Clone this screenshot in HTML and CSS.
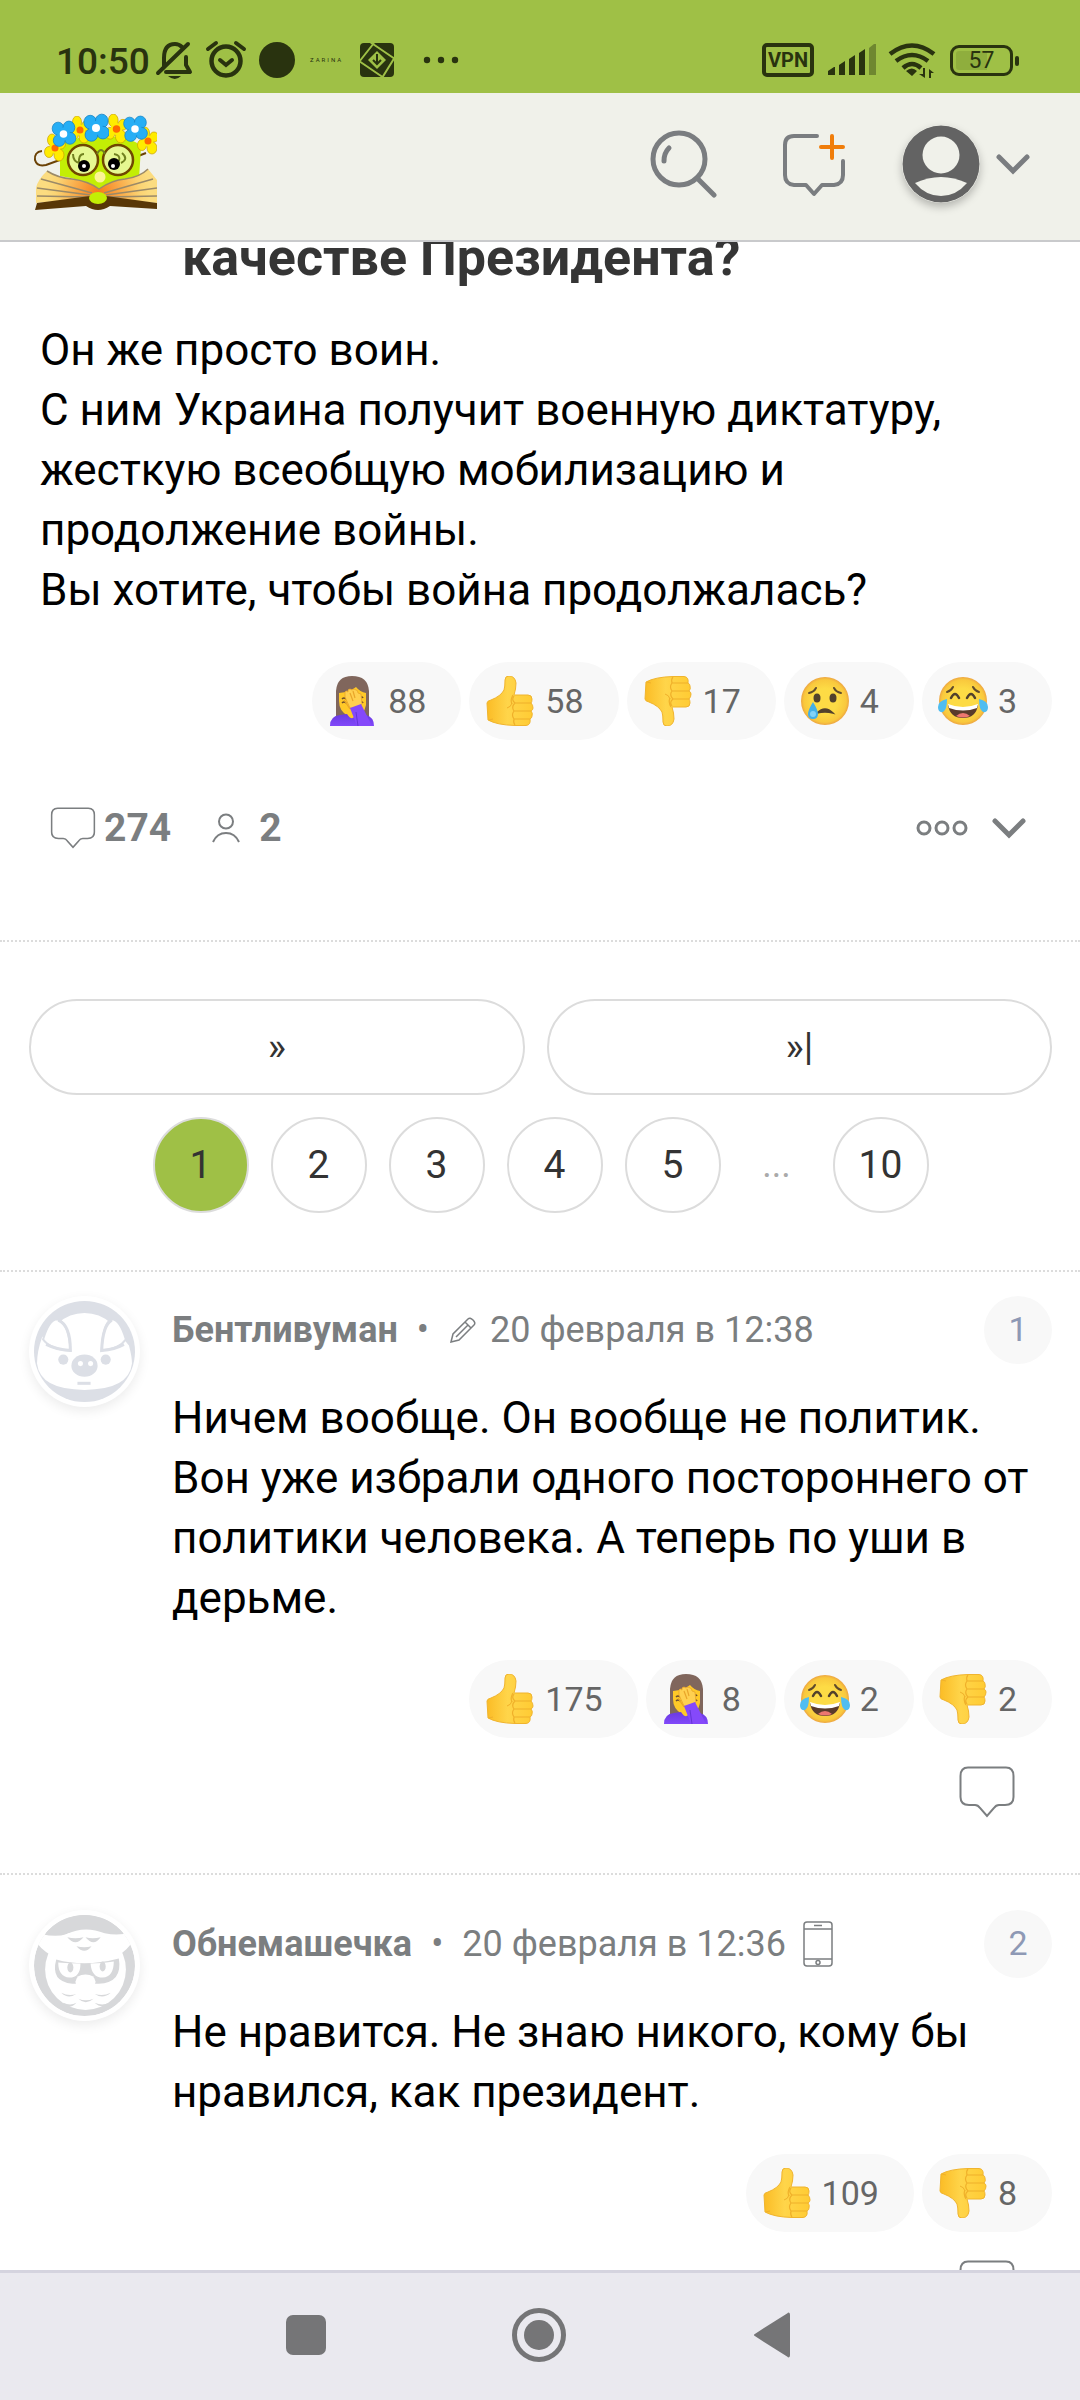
FILE: index.html
```html
<!DOCTYPE html>
<html lang="ru">
<head>
<meta charset="utf-8">
<meta name="viewport" content="width=device-width, initial-scale=1">
<title>Обсуждение</title>
<link rel="stylesheet" href="styles.css">
</head>
<body>
<svg class="sprite" aria-hidden="true">
  <defs>
    <radialGradient id="face" cx=".5" cy=".5" r=".52"><stop offset=".5" stop-color="#fddb45"/><stop offset=".85" stop-color="#f9c83d"/><stop offset="1" stop-color="#e99a42"/></radialGradient>
    <linearGradient id="sleeve" x1="0" y1="0" x2="0" y2="1"><stop offset="0" stop-color="#6a3ae0"/><stop offset="1" stop-color="#8148fa"/></linearGradient>
    <linearGradient id="hand" x1="0" y1="0" x2="1" y2="0"><stop offset="0" stop-color="#fbbc26"/><stop offset=".45" stop-color="#ffd54a"/><stop offset="1" stop-color="#ffcb33"/></linearGradient>
  </defs>
  <symbol id="thumb" viewBox="0 0 50 50">
    <path d="M2 27 Q2 25 6 24 Q16 20 19 14 Q20 11 20 4 Q20 0 24 0 Q30 0 31 7 Q31 13 29 19 H43 Q47 19 47 23 Q47 26 46 27 Q48 29 48 32 Q48 34 46 35 Q48 37 47 40 Q47 42 45 43 Q46 49 41 49.500 H30 Q12 49 3 44 Z" fill="url(#hand)" stroke="#f0b42e" stroke-width="1"/>
    <path d="M28 19 Q25 24 27 28 M30 27 H46 M29 35 H46 M29 43 H45 M29 20 Q26 24 30 27 Q26 31 29 35 Q26 39 29 43 Q28 47 30 49" fill="none" stroke="#f0b02a" stroke-width="1.200"/>
    <path d="M4 44 L8 43 M27 27 Q26 31 22 32" fill="none" stroke="#f0b02a"/>
  </symbol>
  <symbol id="thumb-down" viewBox="0 0 50 50"><use href="#thumb" width="50" height="50" transform="matrix(1 0 0 -1 0 50)"/></symbol>
  <symbol id="facepalm" viewBox="0 0 50 50">
    <path d="M8 42 V15 Q9 0 24 0 Q40 0 41 15 V42 Z" fill="#80665c"/>
    <path d="M11 17 Q22 16 28 11 Q32 16 38 17 V29 Q36 39 28 41 V44 H20 V40 Q11 35 11 25 Z" fill="#ffc928"/>
    <path d="M2 50 Q2 40 12 39 L19 38 Q24 46 28 39 L38 39 Q46 41 46 50 Z" fill="url(#sleeve)"/>
    <path d="M14 23 q2 -2 4 0 M14 27 q2 -2 4 0 M31 22 q3 -2 4 0 M31 27 q3 -2 4 0" fill="none" stroke="#6c4d2c" stroke-width="1.500"/>
    <path d="M17 16 Q18 14 20 16 L20 14 Q22 12 24 14 Q26 12 28 14 Q30 14 30 17 L33 18 L34 28 L29 33 L22 32 L17 21 Z" fill="#ffd050" stroke="#e9a52a" stroke-width=".8"/>
    <path d="M22 17 L25 25 M25 15 L27 22 M16 24 L22 33" stroke="#e9a52a" stroke-width="1.200"/>
    <path d="M22 32 L33 28 L44 50 H29 Z" fill="#8549fa"/>
    <path d="M28 36 L30 50" stroke="#6334d4" stroke-width="1"/>
  </symbol>
  <symbol id="cry" viewBox="0 0 50 50">
    <circle cx="25" cy="25" r="24" fill="url(#face)"/>
    <ellipse cx="17" cy="22" rx="3.500" ry="4.500" fill="#52412c"/><ellipse cx="33" cy="22" rx="3.500" ry="4.500" fill="#52412c"/>
    <path d="M9 17 Q14 16 16 12 M41 17 Q36 16 34 12" fill="none" stroke="#604b2c" stroke-width="2" stroke-linecap="round"/>
    <path d="M17 37 Q25 29 33 37 Q25 35 17 37Z" fill="#52412c" stroke="#52412c" stroke-width="1.500"/>
    <path d="M13 26 Q18 34 18 38 Q18 43 13 43 Q8 43 8 38 Q8 34 13 26Z" fill="#43afe8"/><circle cx="13" cy="38" r="3" fill="#82d2f7"/>
  </symbol>
  <symbol id="joy" viewBox="0 0 50 50">
    <circle cx="25" cy="25" r="24" fill="url(#face)"/>
    <path d="M9 16 Q13 15 15 11 M41 16 Q37 15 35 11" fill="none" stroke="#604b2c" stroke-width="2" stroke-linecap="round"/>
    <path d="M13 22 Q17 14 21 22 M29 22 Q33 14 37 22" fill="none" stroke="#52412c" stroke-width="2.500" stroke-linecap="round"/>
    <path d="M10 29 Q25 35 40 29 Q38 42 25 42 Q12 42 10 29Z" fill="#5a3b2b"/><path d="M10 28 Q25 34 40 28 L39 32 Q25 37 11 32Z" fill="#fff"/><path d="M18 40 Q25 34 32 40 Q25 43 18 40Z" fill="#ed7770"/>
    <path d="M9 23 Q0 25 0 31 Q0 37 5 36 Q9 34 9 23Z M41 23 Q50 25 50 31 Q50 37 45 36 Q41 34 41 23Z" fill="#4fbdf0"/>
  </symbol>
  <symbol id="bubble" viewBox="0 0 56 52">
    <path d="M9 1.500 H47 Q54.500 1.500 54.500 10 V31 Q54.500 39 46 39 H40 Q37 39 35 42 L28 50 L21 42 Q19 39 16 39 H10 Q1.500 39 1.500 31 V10 Q1.500 1.500 9 1.500Z" fill="none" stroke="#7b7e80" stroke-width="2"/>
  </symbol>
  <symbol id="blue-flower" viewBox="-11 -13 22 26">
    <g fill="#26aef5" stroke="#1583c4" stroke-width=".7"><ellipse cx="-5" cy="-5" rx="5.500" ry="6"/><ellipse cx="5" cy="-6" rx="5.500" ry="6"/><ellipse cx="6" cy="4" rx="5.500" ry="5.500"/><ellipse cx="-4" cy="6" rx="5.500" ry="5.500"/></g><circle r="6" fill="#26aef5"/><circle r="3.500" fill="#fff"/>
  </symbol>
  <symbol id="yellow-flower" viewBox="-11 -14 22 28">
    <g fill="#ffec00" stroke="#caa100" stroke-width=".7"><ellipse cx="-3" cy="-8" rx="4.500" ry="6"/><ellipse cx="6" cy="-4" rx="4.500" ry="5"/><ellipse cx="4" cy="7" rx="5" ry="6"/><ellipse cx="-6" cy="4" rx="4.500" ry="5.500"/></g><circle r="5.500" fill="#ffec00"/><circle r="3.500" fill="#ff6a00"/>
  </symbol>
</svg>

<div class="screen">
  <div class="status">
    <div class="status-side">
      <span class="clock">10:50</span>
      <svg class="notifications" viewBox="155 38 305 44" aria-hidden="true">
        <g fill="none" stroke="#29330f" stroke-width="4">
          <path d="M164 66 V58 Q164 44 175 44 Q179 44 182 47 M186 57 V65 L190 72 H166 M158 73 L188 44" stroke-linecap="round" stroke-linejoin="round"/>
          <circle cx="226" cy="61" r="14.500" stroke-width="4.500"/><path d="M220 60 L226 65 L232 60 M208 49 L216 43 M236 43 L244 49" stroke-linecap="round"/>
        </g>
        <path d="M168 76 H181 Q175 82 168 76Z" fill="#29330f"/>
        <circle cx="277" cy="60" r="18" fill="#29330f"/>
        <text class="brand" x="310" y="62">ZARINA</text>
        <rect x="360" y="43" width="34" height="34" rx="4" fill="#29330f"/>
        <path d="M370 42 L395 59 M395 57 L382 78 M384 78 L359 61 M359 62 L374 43" stroke="#9fc046" stroke-width="2"/>
        <path d="M377 51 L386 60 L377 69 L368 60Z" fill="#9fc046"/><path d="M377 54 V64 M373 60 L377 64 L381 60" stroke="#29330f" stroke-width="2" fill="none"/>
        <g fill="#29330f"><circle cx="427" cy="60" r="3.200"/><circle cx="441" cy="60" r="3.200"/><circle cx="455" cy="60" r="3.200"/></g>
      </svg>
    </div>
    <div class="status-side">
      <span class="vpn">VPN</span>
      <svg class="signals" viewBox="826 42 110 38" aria-hidden="true">
        <g fill="#29330f"><path d="M827 76 V72 L833 68 H834 V76Z M838 76 V66 L844 62 V76Z M848 76 V60 L854 56 V76Z M858 76 V54 L864 50 V76Z"/><path d="M868 76 V49 L873 45 H875 V76Z" opacity=".4"/><path d="M911 77 L905 72 Q911 67 916 72Z M922 69 v6 h-4 l6 4 v-10z M928 79 v-9 l5 4 h-3 v5z"/></g>
        <path d="M889 55 Q911 38 933 55 M895 62 Q911 50 927 62 M902 69 Q911 61 920 69" fill="none" stroke="#29330f" stroke-width="4.500"/>
      </svg>
      <span class="battery">57</span>
    </div>
  </div>

  <header class="topbar">
    <a class="home" href="#" aria-label="Главная">
      <svg viewBox="33 112 124 98">
        <defs><radialGradient id="page" gradientUnits="userSpaceOnUse" cx="98" cy="192" r="52"><stop offset="0" stop-color="#f77a18"/><stop offset=".8" stop-color="#fbd372"/><stop offset="1" stop-color="#fbdc80"/></radialGradient></defs>
        <path d="M42 150 Q34 151 35 159 Q37 166 46 164 L68 156 M133 157 L146 152" fill="none" stroke="#6b4205" stroke-width="2"/>
        <path d="M60 146 Q66 136 100 135 Q135 136 141 146 L139 178 Q110 180 99 190 Q84 178 60 175Z" fill="#c3ee05"/>
        <path d="M36 202 V187 Q38 178 47 170 Q58 177 72 178 Q88 180 99 188 Q112 179 125 178 Q140 176 148 168 L157 179 V202 L98 196Z" fill="url(#page)"/>
        <path d="M47 170 Q58 177 72 178 Q88 180 99 188 Q112 179 125 178 Q140 176 148 168 M41 178 L92 192 M37 187 L90 194 M37 195 L88 196 M153 178 L104 192 M157 187 L106 194 M157 195 L108 196" fill="none" stroke="#9b8a68" stroke-width="1.500"/>
        <path d="M35 209 L37 202 L90 195 H106 L157 202 V208 L110 205 Q98 213 86 205Z" fill="#583707"/>
        <ellipse cx="98" cy="197" rx="9" ry="6" fill="#c3ee05"/>
        <g fill="#e6f891" stroke="#704700" stroke-width="2.500"><circle cx="83" cy="159" r="15"/><circle cx="118" cy="159" r="15"/></g>
        <path d="M97 153 Q101 145 105 153 M73 153 Q73 161 80 162 M84 153 Q78 153 79 163 M114 153 Q121 154 119 160 M122 152 Q129 158 121 162" fill="none" stroke="#71811f" stroke-width="2"/>
        <circle cx="84" cy="165" r="6" fill="#000"/><circle cx="114" cy="163" r="6" fill="#000"/><circle cx="84" cy="165" r="2" fill="#fff"/><circle cx="113" cy="165" r="2" fill="#fff"/><circle cx="100" cy="176" r="5.500" fill="#fcf495"/>
        <use href="#yellow-flower" x="44" y="132" width="22" height="30"/><use href="#yellow-flower" x="69" y="115" width="22" height="28"/><use href="#yellow-flower" x="104" y="113" width="25" height="30"/><use href="#yellow-flower" x="137" y="126" width="22" height="28"/>
        <use href="#blue-flower" x="51" y="119" width="25" height="28"/><use href="#blue-flower" x="83" y="112" width="26" height="30"/><use href="#blue-flower" x="122" y="114" width="26" height="28"/>
      </svg>
    </a>
    <div class="actions">
      <button class="action" aria-label="Поиск"><svg width="68" height="68" viewBox="0 0 68 68" fill="none" stroke="#7a7d80" stroke-width="5" stroke-linecap="round"><circle cx="29" cy="29" r="26"/><path d="M47 48 L64 65"/><path d="M19 18 Q14 23 14 31"/></svg></button>
      <button class="action" aria-label="Создать"><svg width="66" height="66" viewBox="0 0 66 66" fill="none" stroke="#7a7d80" stroke-width="4" stroke-linecap="round" stroke-linejoin="round"><path d="M36 5 H13 Q4 5 4 14 V44 Q4 53 13 54 H25 L33 63 L41 54 H53 Q62 53 62 44 V30"/><path d="M51 5 V27 M40 16 H62" stroke="#f07d0a"/></svg></button>
      <button class="action profile" aria-label="Профиль"><svg class="profile-face" width="78" height="78" viewBox="0 0 78 78"><circle cx="39" cy="39" r="38.500" fill="#636363"/><circle cx="39" cy="30" r="18.500" fill="#f0f1ea"/><path d="M13 58 Q39 46 65 58 Q54 71 39 71 Q24 71 13 58Z" fill="#f0f1ea"/></svg><svg width="34" height="22" viewBox="0 0 34 22"><path d="M3 4 L17 18 L31 4" fill="none" stroke="#7a7d80" stroke-width="5" stroke-linecap="round"/></svg></button>
    </div>
  </header>

  <main class="content">
    <article class="post">
      <h1 class="post-title">качестве Президента?</h1>
      <p class="text">Он же просто воин.<br>С ним Украина получит военную диктатуру, жесткую всеобщую мобилизацию и продолжение войны.<br>Вы хотите, чтобы война продолжалась?</p>
      <div class="reactions">
        <button class="reaction"><svg><use href="#facepalm"/></svg>88</button>
        <button class="reaction"><svg><use href="#thumb"/></svg>58</button>
        <button class="reaction"><svg><use href="#thumb-down"/></svg>17</button>
        <button class="reaction"><svg><use href="#cry"/></svg>4</button>
        <button class="reaction"><svg><use href="#joy"/></svg>3</button>
      </div>
      <div class="stats">
        <a class="stat" href="#"><svg width="46" height="42" viewBox="0 0 56 52"><use href="#bubble" width="56" height="52"/></svg>274</a>
        <a class="stat people" href="#"><svg width="30" height="30" viewBox="0 0 30 30" fill="none" stroke="#7b7e80" stroke-width="2"><circle cx="15" cy="8.500" r="7"/><path d="M2 29 Q6 20 15 20 Q24 20 28 29"/></svg>2</a>
        <button class="more" aria-label="Ещё"><svg width="52" height="18" viewBox="0 0 52 18" fill="none" stroke="#7b7e80" stroke-width="3"><circle cx="8" cy="9" r="6"/><circle cx="26" cy="9" r="6"/><circle cx="44" cy="9" r="6"/></svg><svg width="34" height="22" viewBox="0 0 34 22"><path d="M3 4 L17 18 L31 4" fill="none" stroke="#7b7e80" stroke-width="5" stroke-linecap="round"/></svg></button>
      </div>
    </article>

    <nav class="pager" aria-label="Страницы">
      <div class="pager-row">
        <a class="page jump" href="#">»</a><a class="page jump" href="#">»|</a>
      </div>
      <div class="pager-row pages">
        <a class="page current" href="#" aria-current="page">1</a><a class="page" href="#">2</a><a class="page" href="#">3</a><a class="page" href="#">4</a><a class="page" href="#">5</a><span class="gap">...</span><a class="page" href="#">10</a>
      </div>
    </nav>

    <article class="comment first">
      <span class="avatar"><svg viewBox="0 0 100 100">
        <defs><clipPath id="round"><circle cx="50" cy="50" r="50"/></clipPath></defs>
        <circle cx="50" cy="50" r="50" fill="#dcdfe6"/>
        <path d="M24 22 Q35 12 50 12 Q65 12 76 22 L94 44 Q97 55 97 62 Q94 88 50 88 Q6 88 3 62 Q3 50 8 36Z" fill="#fff"/>
        <path d="M9 38 Q15 18 23 18 Q35 22 36 49 Q16 48 9 38Z M91 38 Q85 18 77 18 Q68 22 67 49 Q84 48 91 38Z" fill="#fff" stroke="#dcdfe6" stroke-width="2"/>
        <path d="M24 19 Q36 24 36 49 Q22 48 12 43 M77 19 Q68 24 67 49 Q80 48 89 43" fill="none" stroke="#dcdfe6" stroke-width="3"/>
        <g fill="#dcdfe6"><circle cx="29" cy="58" r="5"/><circle cx="71" cy="58" r="5"/><ellipse cx="50" cy="64" rx="13" ry="11"/><rect x="43" y="80" width="13" height="3"/></g><circle cx="46" cy="62" r="2.500" fill="#fff"/><circle cx="56" cy="62" r="2.500" fill="#fff"/>
      </svg></span>
      <div class="comment-main">
        <div class="meta">
          <a class="author" href="#">Бентливуман</a><span class="dot">•</span>
          <svg class="pencil" width="26" height="26" viewBox="0 0 26 26" fill="none" stroke="#7b7e80" stroke-width="1.500"><path d="M1 25 L3 17 L18 2 Q20 0 23 3 Q26 6 24 8 L9 23Z M15 5 L21 11 M6 20 L18 8"/></svg>
          <time>20 февраля в 12:38</time><a class="number" href="#">1</a>
        </div>
        <p class="text">Ничем вообще. Он вообще не политик. Вон уже избрали одного постороннего от политики человека. А теперь по уши в дерьме.</p>
        <div class="reactions">
          <button class="reaction"><svg><use href="#thumb"/></svg>175</button>
          <button class="reaction"><svg><use href="#facepalm"/></svg>8</button>
          <button class="reaction"><svg><use href="#joy"/></svg>2</button>
          <button class="reaction"><svg><use href="#thumb-down"/></svg>2</button>
        </div>
        <button class="reply" aria-label="Ответить"><svg width="56" height="52"><use href="#bubble"/></svg></button>
      </div>
    </article>

    <article class="comment">
      <span class="avatar"><svg viewBox="0 0 100 100">
        <g clip-path="url(#round)"><circle cx="50" cy="50" r="50" fill="#d7d8da"/>
        <circle cx="51" cy="54" r="40" fill="#fff"/>
        <path d="M0 0 H100 V18 H0Z" fill="#d7d8da"/>
        <path d="M8 19 Q22 22 32 19 Q50 10 70 18 Q84 21 96 17 L95 30 Q82 47 50 48 Q18 47 3 28Z" fill="#fff"/>
        <path d="M22 44 Q50 52 84 43 Q88 67 64 68 L38 68 Q16 66 22 44Z" fill="#d7d8da"/>
        <path d="M24 47 Q35 48 46 48 Q46 62 35 62 Q24 61 24 47Z M56 48 Q68 48 79 46 Q79 61 68 62 Q57 62 56 48Z" fill="#fff"/>
        <ellipse cx="36" cy="52" rx="3" ry="5" fill="#d7d8da"/><ellipse cx="68" cy="51" rx="3" ry="5" fill="#d7d8da"/>
        <path d="M41 66 Q42 59 51 59 Q60 59 61 66 Q61 70 51 79 Q41 71 41 66Z" fill="#fff"/>
        <path d="M33 22 Q41 24 49 22 Q41 32 33 22Z M51 22 Q58 24 66 22 Q59 32 51 22Z M42 31 Q50 33 57 31 Q50 40 42 31Z M27 77 Q35 81 42 78 Q34 84 27 77Z M60 78 Q68 81 76 77 Q68 84 60 78Z M44 83 Q51 86 59 83 Q51 90 44 83Z M29 87 Q36 90 42 87 Q36 94 29 89Z M60 87 Q68 90 74 87 Q68 94 60 87Z" fill="#d7d8da"/></g>
      </svg></span>
      <div class="comment-main">
        <div class="meta">
          <a class="author" href="#">Обнемашечка</a><span class="dot">•</span>
          <time>20 февраля в 12:36</time>
          <svg class="phone" width="30" height="46" viewBox="0 0 30 46" fill="none" stroke="#7b7e80" stroke-width="1.500"><rect x="1" y="1" width="28" height="44" rx="3"/><path d="M1 8 H29 M1 38 H29 M11 4.500 H19"/><circle cx="15" cy="41.500" r="2"/></svg>
          <a class="number" href="#">2</a>
        </div>
        <p class="text">Не нравится. Не знаю никого, кому бы нравился, как президент.</p>
        <div class="reactions">
          <button class="reaction"><svg><use href="#thumb"/></svg>109</button>
          <button class="reaction"><svg><use href="#thumb-down"/></svg>8</button>
        </div>
        <button class="reply" aria-label="Ответить"><svg width="56" height="52"><use href="#bubble"/></svg></button>
      </div>
    </article>
  </main>

  <nav class="system" aria-label="Навигация">
    <button aria-label="Недавние"><svg width="40" height="40"><rect width="40" height="40" rx="7" fill="#757577"/></svg></button>
    <button aria-label="Домой"><svg width="54" height="54"><circle cx="27" cy="27" r="24.500" fill="none" stroke="#757577" stroke-width="5"/><circle cx="27" cy="27" r="15" fill="#757577"/></svg></button>
    <button aria-label="Назад"><svg width="38" height="46"><path d="M2 23 L35 2 Q36 1 36 3 V43 Q36 45 35 44Z" fill="#757577" stroke="#757577" stroke-width="2" stroke-linejoin="round"/></svg></button>
  </nav>
</div>
</body>
</html>
```
FILE: styles.css
```css
* { box-sizing: border-box; }
body { margin: 0; background: #fff; color: #000; font-family: Roboto, "Noto Sans", sans-serif; }
a { color: inherit; text-decoration: none; }
button { margin: 0; padding: 0; border: 0; background: none; font: inherit; color: inherit; }
svg { display: block; flex: none; }
.sprite { position: absolute; width: 0; height: 0; }
.screen { display: flex; flex-direction: column; height: 100vh; }

/* device status bar */
.status { display: flex; flex: none; justify-content: space-between; height: 93px; padding: 27px 67px 0 56px; background: #9fc046; color: #29330f; }
.status-side { display: flex; align-items: center; }
.clock { padding-top: 3px; font-size: 37px; font-weight: 500; line-height: 44px; }
.notifications { width: 305px; height: 44px; margin-left: 5px; }
.brand { fill: #29330f; font-size: 6px; letter-spacing: 2px; }
.vpn { width: 52px; height: 34px; border: 4px solid; border-radius: 5px; font-size: 20px; font-weight: 700; line-height: 27px; text-align: center; }
.signals { width: 110px; height: 38px; margin: 0 13px; }
.battery { position: relative; width: 63px; height: 31px; border: 3px solid; border-radius: 9px; background: linear-gradient(90deg, #8fae3d 60%, transparent 60%) content-box; padding: 3px; font-size: 23px; line-height: 20px; text-align: center; }
.battery::after { content: ""; position: absolute; top: 8px; right: -9px; width: 4px; height: 10px; border-radius: 2px; background: #29330f; }

/* site header */
.topbar { display: flex; flex: none; align-items: center; justify-content: space-between; height: 149px; padding: 0 50px 0 33px; border-bottom: 2px solid #c9cacc; background: #f0f1ea; }
.home svg { width: 124px; height: 98px; margin-bottom: 10px; }
.actions { display: flex; align-items: center; gap: 63px; margin-bottom: 6px; }
.profile { display: flex; align-items: center; gap: 16px; margin-left: -8px; }
.profile-face { border-radius: 50%; box-shadow: 0 4px 8px rgba(0, 0, 0, .25); }

.content { flex: 1; min-height: 0; overflow: hidden; }

/* post */
.post { margin-top: -12px; padding: 0 28px 88px 40px; border-bottom: 2px dotted #dcdcdc; }
.post-title { margin: 0 0 34px 142px; color: #353535; font-size: 52px; font-weight: 700; line-height: 56px; }
.text { margin: 0; font-size: 44px; line-height: 60px; }
.reactions { display: flex; flex-wrap: wrap; justify-content: flex-end; gap: 8px; margin-top: 42px; }
.reaction { display: flex; align-items: center; gap: 10px; height: 78px; padding: 0 35px 0 16px; border-radius: 39px; background: #f8f8f8; color: #666; font-size: 34px; }
.reaction svg { width: 50px; height: 50px; }
.stats { display: flex; align-items: center; height: 48px; margin-top: 64px; padding: 0 26px 0 10px; color: #7b7e80; font-size: 39px; font-weight: 700; }
.stat { display: flex; align-items: center; gap: 8px; margin-right: 40px; }
.people { gap: 18px; }
.more { display: flex; align-items: center; gap: 24px; margin-left: auto; }

/* page links */
.pager { display: grid; gap: 22px; padding: 57px 28px 57px 29px; border-bottom: 2px dotted #dcdcdc; color: #333; font-size: 39px; }
.pager-row { display: flex; gap: 22px; }
.pages { justify-content: center; }
.page { display: flex; align-items: center; justify-content: center; min-width: 96px; height: 96px; border: 2px solid #dcdcdc; border-radius: 48px; }
.jump { flex: 1 1 auto; }
.current { background: #9fc046; }
.gap { width: 68px; color: #aaa; line-height: 96px; text-align: center; font-size: 36px; }

/* comments */
.comment { display: flex; gap: 32px; padding: 35px 28px 55px 29px; border-bottom: 2px dotted #dcdcdc; }
.first { padding-top: 24px; }
.avatar { flex: none; width: 111px; height: 111px; padding: 5px; border-radius: 50%; background: #fff; box-shadow: 0 4px 12px rgba(0, 0, 0, .08); }
.comment-main { flex: 1; min-width: 0; }
.comment .reactions { margin-top: 32px; }
.meta { display: flex; align-items: center; height: 68px; margin-bottom: 24px; color: #7b7e80; font-size: 36px; }
.author { font-weight: 700; }
.dot { margin: 0 19px; }
.pencil { margin: 0 14px 0 2px; }
.phone { margin-left: 17px; }
.number { width: 68px; height: 68px; margin-left: auto; border-radius: 50%; background: #f8f8f8; color: #8e99b5; font-size: 34px; line-height: 66px; text-align: center; }
.reply { display: block; margin: 28px 37px 0 auto; }

/* device navigation */
.system { display: flex; flex: none; justify-content: center; height: 130px; padding: 0 2px 4px 0; border-top: 3px solid #d5d4df; background: #eae9ef; }
.system button { display: grid; place-items: center; width: 233px; }
```
